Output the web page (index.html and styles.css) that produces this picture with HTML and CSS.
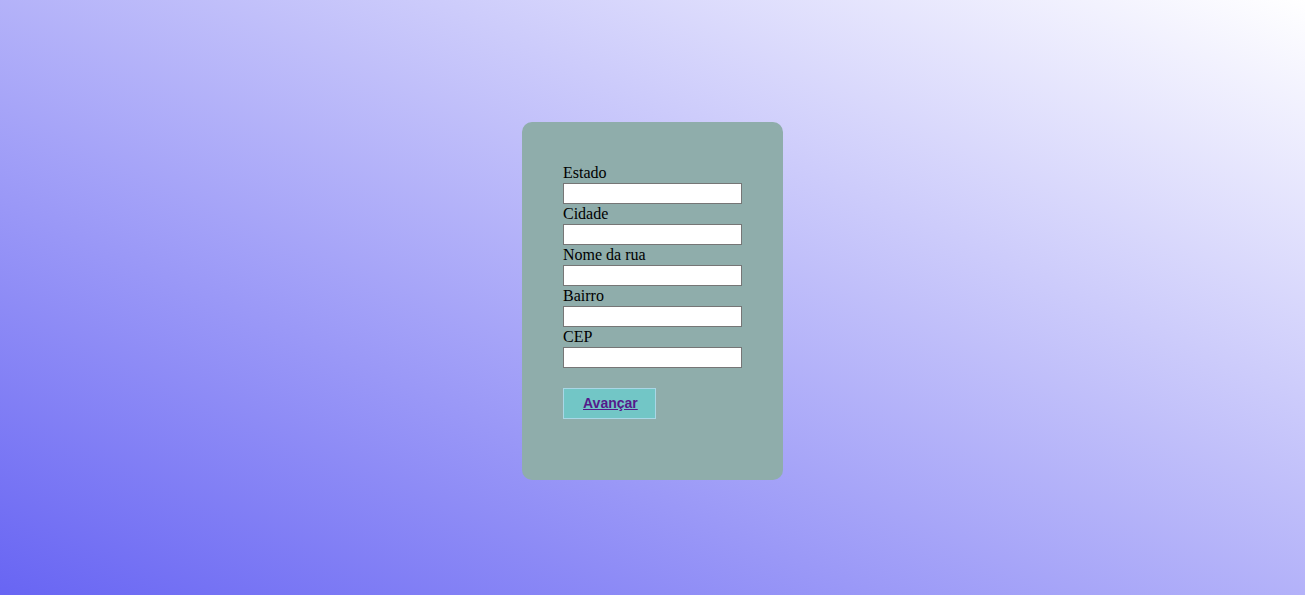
FILE: index.html
```html
<!DOCTYPE html>
<html lang="pt-BR">
<head>
<meta charset="utf-8">
<title>Endereço</title>
<link rel="stylesheet" href="styles.css">
</head>
<body>
<main class="page">
  <form class="card">
    <label class="field-label" for="estado">Estado</label>
    <input class="field-input" id="estado" type="text">
    <label class="field-label" for="cidade">Cidade</label>
    <input class="field-input" id="cidade" type="text">
    <label class="field-label" for="rua">Nome da rua</label>
    <input class="field-input" id="rua" type="text">
    <label class="field-label" for="bairro">Bairro</label>
    <input class="field-input" id="bairro" type="text">
    <label class="field-label" for="cep">CEP</label>
    <input class="field-input" id="cep" type="text">
    <button class="next-btn" type="button"><a class="next-link" href="#">Avançar</a></button>
  </form>
</main>
</body>
</html>
```

FILE: styles.css
```css
html, body {
  margin: 0;
  padding: 0;
  background: #ffffff;
}

.page {
  height: 595px;
  background: linear-gradient(to top right, #6865f3, #ffffff);
  display: flex;
  justify-content: center;
  align-items: flex-start;
  padding-top: 122px;
  box-sizing: border-box;
}

.card {
  width: 261px;
  height: 358px;
  box-sizing: border-box;
  padding: 41px 41px;
  background: #8fadab;
  border-radius: 10px;
  display: flex;
  flex-direction: column;
  align-items: flex-start;
  font-family: "Liberation Serif", "Times New Roman", serif;
  font-size: 16px;
  color: #000;
}

.field-label {
  display: block;
  line-height: 20px;
  height: 20px;
}

.field-input {
  display: block;
  width: 179px;
  height: 21px;
  box-sizing: border-box;
  margin: 0;
  padding: 1px 2px;
  border: 1px solid #767676;
  background: #fff;
  font-family: "Liberation Sans", Arial, sans-serif;
  font-size: 13.33px;
}

.next-btn {
  margin-top: 20px;
  width: 93px;
  height: 31px;
  box-sizing: border-box;
  padding: 0 0 2px 19px;
  text-align: left;
  background: #72c6c6;
  border: 1px solid #a9d7e6;
  cursor: pointer;
}

.next-link {
  font-family: "Liberation Sans", Arial, sans-serif;
  font-size: 14px;
  font-weight: bold;
  color: #551a8b;
  text-decoration: underline;
}
```
